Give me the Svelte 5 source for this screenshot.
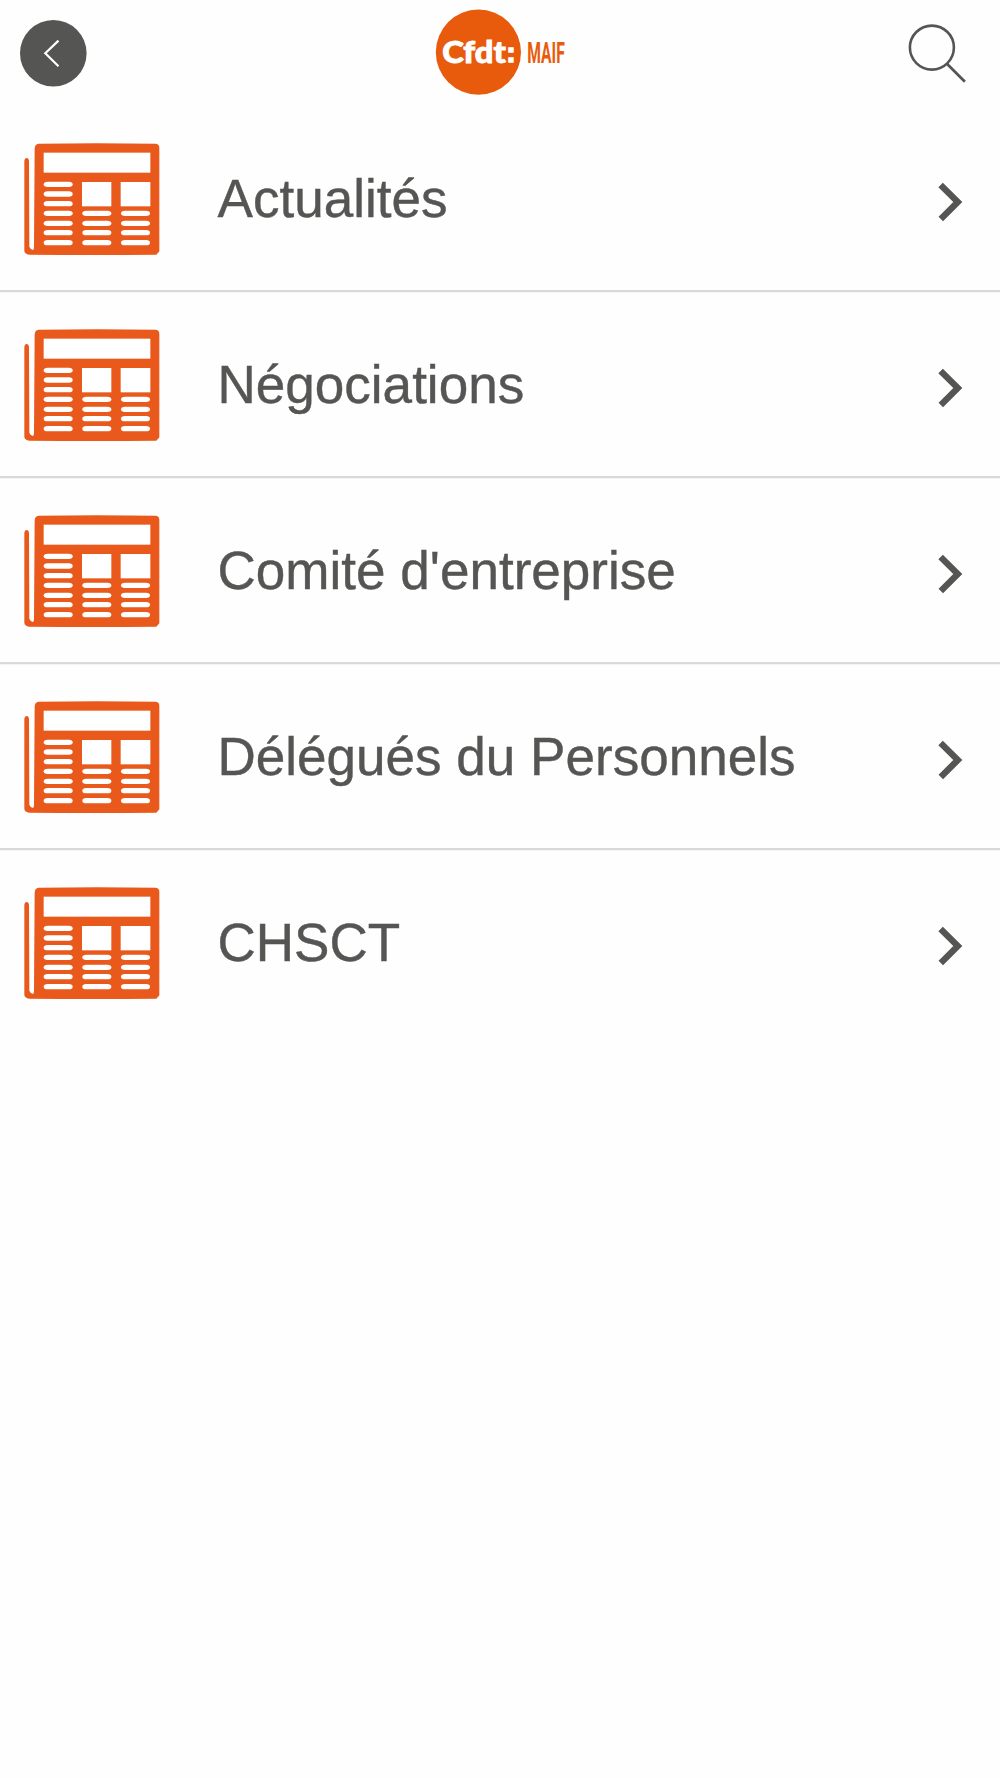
<script>
  const items = [
    'Actualités',
    'Négociations',
    "Comité d'entreprise",
    'Délégués du Personnels',
    'CHSCT',
  ];
  const lines = [155, 184, 213, 242, 272, 300, 330];
</script>

<div class="screen">
  <header>
    <button class="back" aria-label="Retour">
      <svg width="68" height="68" viewBox="0 0 68 68">
        <circle cx="33.3" cy="33.3" r="33.3" fill="#555553" />
        <path d="M38.5 20.6 25.3 33.3l13.2 12.9" fill="none" stroke="#fff" stroke-width="2.2" />
      </svg>
    </button>
    <svg class="logo" width="160" height="106" viewBox="0 0 160 106" role="img" aria-label="Cfdt: MAIF">
      <circle cx="58.4" cy="52.2" r="42.6" fill="#e95b0c" />
      <text class="cfdt" transform="translate(22.2 62.6) scale(1.09 1)">Cfdt</text>
      <text class="colon" x="86.6" y="62">:</text>
      <text class="maif" transform="translate(107.2 62.7) scale(.54 1)">MAIF</text>
    </svg>
    <button class="search" aria-label="Rechercher">
      <svg width="62" height="62" viewBox="0 0 62 62" fill="none" stroke="#555553">
        <circle cx="23.9" cy="25.6" r="22" stroke-width="2.6" />
        <path d="M38.9 41.8 56.9 59.8" stroke-width="2.8" />
      </svg>
    </button>
  </header>
  <nav>
    {#each items as item}
      <div class="row">
        <svg class="news" width="160" height="140" viewBox="0 0 480 420">
          <path
            fill="#e9591b"
            d="M74 56Q74 43 86 41Q260 38 438 41Q448 42 448 53V364L439 374Q250 376 58 374Q43 371 43 362L43 93Q44 84 50 84Q56 84 57 93L58 350Q60 357 69 360Q72 359 72 350Z"
          />
          <g fill="#fff">
            <rect x="101" y="68" width="320" height="60" />
            <rect x="216" y="156" width="88" height="73" />
            <rect x="332" y="156" width="89" height="73" />
            {#each lines as y, i}
              <rect x="101" {y} width="87" height="16" rx="12" ry="8" />
              {#if i > 2}
                <rect x="217" {y} width="87" height="16" rx="12" ry="8" />
                <rect x="333" {y} width="87" height="16" rx="12" ry="8" />
              {/if}
            {/each}
          </g>
        </svg>
        <span>{item}</span>
        <svg class="chevron" width="26" height="40" viewBox="0 0 26 40">
          <path d="M2.6 3 19.8 20 2.8 37" fill="none" stroke="#555553" stroke-width="6.4" />
        </svg>
      </div>
    {/each}
  </nav>
</div>

<style>
  :global(body) {
    background: #fefefe;
  }
  .screen {
    min-height: 1778px;
    font-family: 'Liberation Sans', Arial, sans-serif;
    color: #555553;
  }
  header {
    display: grid;
    grid-template-columns: 420px 160px 1fr;
    height: 106px;
  }
  button {
    display: block;
    border: 0;
    padding: 0;
    background: none;
    line-height: 0;
  }
  .back {
    justify-self: start;
    align-self: start;
    margin: 20px 0 0 20px;
  }
  .search {
    justify-self: end;
    align-self: start;
    margin: 22px 30px 0 0;
  }
  .logo {
    overflow: visible;
  }
  .cfdt {
    font: 900 30px Lato, sans-serif;
    fill: #fff;
    stroke: #fff;
    stroke-width: 0.9;
  }
  .colon {
    font: 700 27px 'Liberation Sans', sans-serif;
    fill: #fff;
    stroke: #fff;
    stroke-width: 1.6;
  }
  .maif {
    font: 700 29px Roboto, sans-serif;
    fill: #e95b0c;
  }
  .row {
    display: flex;
    align-items: center;
    box-sizing: border-box;
    height: 186px;
    padding: 4px 36.5px 0 10px;
    border-bottom: 2px solid #d9d9d9;
    box-shadow: 0 1px #f4f4f4;
  }
  .row:last-child {
    border-color: transparent;
    box-shadow: none;
  }
  .news {
    flex: none;
  }
  span {
    flex: 1;
    margin: 0 0 2px 47.5px;
    font-size: 53.05px;
    line-height: 60px;
    white-space: nowrap;
    -webkit-text-stroke: 0.4px #555553;
  }
  .chevron {
    margin-top: 4px;
  }
</style>
